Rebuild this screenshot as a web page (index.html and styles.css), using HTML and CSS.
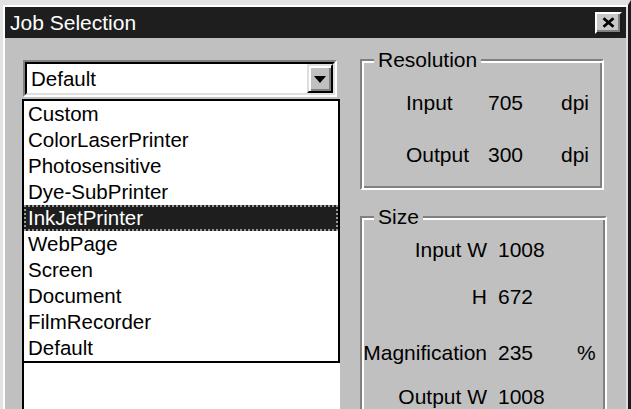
FILE: index.html
```html
<!DOCTYPE html>
<html>
<head>
<meta charset="utf-8">
<title>Job Selection</title>
<link rel="stylesheet" href="styles.css">
</head>
<body>
<div class="window">
  <div class="titlebar">
    <span class="title">Job Selection</span>
    <button class="close" type="button" aria-label="Close">
      <svg width="13" height="11" viewBox="0 0 13 11"><path d="M1.5 1.2 L11.5 9.8 M11.5 1.2 L1.5 9.8" stroke="#000" stroke-width="2.8" fill="none"/></svg>
    </button>
  </div>
  <div class="content">
    <div class="left">
      <div class="combo">
        <div class="combo-inner">
          <span class="combo-value">Default</span>
          <span class="combo-btn">
            <svg width="12" height="7" viewBox="0 0 12 7"><polygon points="0,0 12,0 6,7" fill="#000"/></svg>
          </span>
        </div>
      </div>
      <div class="listbox"></div>
      <ul class="dropdown">
        <li>Custom</li>
        <li>ColorLaserPrinter</li>
        <li>Photosensitive</li>
        <li>Dye-SubPrinter</li>
        <li class="selected">InkJetPrinter</li>
        <li>WebPage</li>
        <li>Screen</li>
        <li>Document</li>
        <li>FilmRecorder</li>
        <li>Default</li>
      </ul>
    </div>
    <div class="right">
      <div class="group group-res">
        <span class="legend">Resolution</span>
        <div class="res-row res-first"><span>Input</span><span>705</span><span>dpi</span></div>
        <div class="res-row res-second"><span>Output</span><span>300</span><span>dpi</span></div>
      </div>
      <div class="group group-size">
        <span class="legend">Size</span>
        <div class="size-row size-1"><span class="lbl">Input W</span><span class="val">1008</span><span></span></div>
        <div class="size-row size-2"><span class="lbl">H</span><span class="val">672</span><span></span></div>
        <div class="size-row size-3"><span class="lbl">Magnification</span><span class="val">235</span><span class="unit">%</span></div>
        <div class="size-row size-4"><span class="lbl">Output W</span><span class="val">1008</span><span></span></div>
      </div>
    </div>
  </div>
</div>
</body>
</html>
```
FILE: styles.css
```css
* { box-sizing: border-box; }
html, body { margin: 0; padding: 0; }
body {
  width: 631px;
  height: 409px;
  overflow: hidden;
  background: #c0c0c0;
  font-family: "Liberation Sans", Arial, sans-serif;
  color: #000;
}
.window {
  width: 631px;
  height: 409px;
  border-top: 5px solid #e2e2e2;
  border-left: 3px solid #e2e2e2;
  border-right: 3px solid #1c1c1c;
  padding: 2px 2px 0 2px;
  box-shadow: inset 2px 2px 0 #ffffff, inset -2px 0 0 #dcdcdc;
  background: #c0c0c0;
  overflow: hidden;
}
.titlebar {
  height: 31px;
  background: #1e1e1e;
  display: flex;
  align-items: center;
  justify-content: space-between;
  padding: 0 4px 0 5px;
}
.title {
  color: #fff;
  font-size: 21px;
  line-height: 24px;
}
.close {
  width: 27px;
  height: 22px;
  padding: 0;
  margin: 0;
  background: #c8c8c8;
  border: 2px solid;
  border-color: #ffffff #1a1a1a #1a1a1a #ffffff;
  box-shadow: inset -2px -2px 0 #808080;
  display: flex;
  align-items: center;
  justify-content: center;
}
.close svg { display: block; margin: 0 1px 1px 0; }
.content {
  display: flex;
  gap: 23px;
  padding: 11px 0 0 18px;
}
.left {
  position: relative;
  width: 314px;
  padding-top: 11px;
}
.combo {
  width: 314px;
  height: 37px;
  border: 2px solid;
  border-color: #808080 #ffffff #ffffff #808080;
}
.combo-inner {
  height: 100%;
  border: 2px solid;
  border-color: #000000 #dfdfdf #dfdfdf #000000;
  background: #fff;
  display: flex;
  align-items: stretch;
}
.combo-value {
  flex: 1;
  font-size: 20.5px;
  line-height: 29px;
  padding-left: 4px;
}
.combo-btn {
  width: 26px;
  background: #c0c0c0;
  border: 2px solid;
  border-color: #dfdfdf #000000 #000000 #dfdfdf;
  box-shadow: inset 2px 2px 0 #ffffff, inset -2px -2px 0 #808080;
  display: flex;
  align-items: center;
  justify-content: center;
}
.combo-btn svg { display: block; margin-top: 1px; }
.listbox {
  margin: 2px 0 0 -1px;
  width: 318px;
  height: 330px;
  background: #fff;
  border-left: 2px solid #000;
}
.dropdown {
  position: absolute;
  left: -1px;
  top: 50px;
  width: 318px;
  margin: 0;
  padding: 0;
  list-style: none;
  background: #fff;
  border: 2px solid #000;
}
.dropdown li {
  height: 26px;
  line-height: 26px;
  font-size: 20.5px;
  padding-left: 4px;
  white-space: nowrap;
}
.dropdown li.selected {
  background: #1e1e1e;
  color: #fff;
  outline: 2px dotted #9a9a9a;
  outline-offset: -2px;
}
.right {
  width: 247px;
  font-size: 21px;
  line-height: 24px;
}
.group {
  position: relative;
  border: 2px solid;
  border-color: #808080 #ffffff #ffffff #808080;
  box-shadow: inset 2px 2px 0 #ffffff, inset -2px -2px 0 #808080;
}
.legend {
  position: absolute;
  top: -13px;
  left: 12px;
  padding: 0 4px;
  background: #c0c0c0;
  line-height: 24px;
  white-space: nowrap;
}
.group-res {
  width: 244px;
  height: 131px;
  margin-top: 10px;
  padding-left: 44px;
}
.res-row {
  display: grid;
  grid-template-columns: 82px 73px auto;
}
.res-first { margin-top: 30px; }
.res-second { margin-top: 28px; }
.group-size {
  width: 247px;
  height: 260px;
  margin-top: 26px;
}
.size-row {
  display: grid;
  grid-template-columns: 125px 90px auto;
  white-space: nowrap;
}
.size-row .lbl { text-align: right; }
.size-row .val { padding-left: 11px; }
.size-1 { margin-top: 20px; }
.size-2 { margin-top: 23px; }
.size-3 { margin-top: 32px; }
.size-4 { margin-top: 20px; }
```
